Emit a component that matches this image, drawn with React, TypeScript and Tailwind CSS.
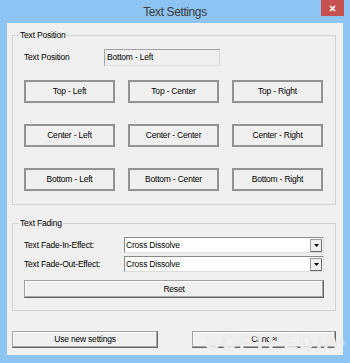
import type { ReactNode } from 'react';

const font = "font-['Liberation_Sans',Arial,sans-serif]";

function PosButton({ children }: { children: ReactNode }) {
  return (
    <button
      type="button"
      className="flex h-[23px] w-[91px] items-center justify-center border-2 border-[#939393] bg-[#f0f0f0] text-[8.5px] tracking-[-0.2px] text-black"
    >
      {children}
    </button>
  );
}

function RaisedButton({ children, className }: { children: ReactNode; className: string }) {
  return (
    <button
      type="button"
      className={`flex items-center justify-center border border-[#a0a0a0] border-b-[#646464] border-r-[#646464] bg-[#f0f0f0] text-[8.5px] tracking-[-0.2px] text-black shadow-[inset_-1px_-1px_0_#a8a8a8,inset_1px_1px_0_#ffffff] ${className}`}
    >
      {children}
    </button>
  );
}

function Combo({ value }: { value: string }) {
  return (
    <div className="flex h-[16px] w-[200px] items-center border border-[#8a8a8a] border-b-[#dcdcdc] border-r-[#dcdcdc] bg-white">
      <span className="flex-1 pl-[1px] text-[8.5px] tracking-[-0.2px]">{value}</span>
      <span className="mr-[1px] flex h-[13px] w-[12px] items-center justify-center border border-[#9c9c9c] border-b-[#6a6a6a] border-r-[#6a6a6a] bg-[#f0f0f0]">
        <svg width="5" height="3" viewBox="0 0 5 3">
          <path d="M0 0h5L2.5 3z" fill="#000" />
        </svg>
      </span>
    </div>
  );
}

export default function App() {
  const positions = [
    'Top - Left', 'Top - Center', 'Top - Right',
    'Center - Left', 'Center - Center', 'Center - Right',
    'Bottom - Left', 'Bottom - Center', 'Bottom - Right',
  ];

  return (
    <div className={`flex h-[363px] w-[350px] flex-col bg-[#8dc4f3] text-black ${font}`}>
      <div className="relative flex h-[23px] items-center justify-center">
        <span className="pt-[1px] text-[12px] tracking-[-0.4px] text-[#3a3a3a]">Text Settings</span>
        <div className="absolute right-[6px] top-0 flex h-[16px] w-[23px] items-center justify-center bg-[#c75050]">
          <svg width="7" height="7" viewBox="0 0 7 7">
            <path d="M1 1l5 5M6 1L1 6" stroke="#fff" strokeWidth="1.6" />
          </svg>
        </div>
      </div>

      <div className="relative mx-[7px] flex h-[332px] flex-col bg-[#f0f0f0] pl-[5px] pt-[6px]">
        <fieldset className="w-[324px] border border-[#d2d2d2] px-[11px] pb-[13px]">
          <legend className="-ml-[5px] px-[1px] text-[8.5px] leading-[12px] tracking-[-0.2px]">Text Position</legend>
          <div className="mt-[8px] flex items-center">
            <span className="w-[80px] text-[8.5px] tracking-[-0.2px]">Text Position</span>
            <div className="flex h-[17px] w-[116px] items-center border border-[#a3a3a3] border-b-[#e2e2e2] border-r-[#d6d6d6] pl-[2px] text-[8.5px] tracking-[-0.2px]">
              Bottom - Left
            </div>
          </div>
          <div className="mt-[14px] grid grid-cols-[91px_91px_91px] gap-x-[13px] gap-y-[21px]">
            {positions.map((p) => (
              <PosButton key={p}>{p}</PosButton>
            ))}
          </div>
        </fieldset>

        <fieldset className="mt-[12px] w-[324px] border border-[#d2d2d2] px-[11px] pb-[12px]">
          <legend className="-ml-[5px] px-[1px] text-[8.5px] leading-[12px] tracking-[-0.2px]">Text Fading</legend>
          <div className="mt-[8px] flex flex-col gap-[3px]">
            <div className="flex items-center">
              <span className="w-[100px] text-[8.5px] tracking-[-0.2px]">Text Fade-In-Effect:</span>
              <Combo value="Cross Dissolve" />
            </div>
            <div className="flex items-center">
              <span className="w-[100px] text-[8.5px] tracking-[-0.2px]">Text Fade-Out-Effect:</span>
              <Combo value="Cross Dissolve" />
            </div>
          </div>
          <RaisedButton className="mt-[8px] h-[18px] w-[300px]">Reset</RaisedButton>
        </fieldset>

        <div className="mt-[20px] flex w-[324px] justify-between">
          <RaisedButton className="h-[17px] w-[146px]">Use new settings</RaisedButton>
          <RaisedButton className="h-[17px] w-[144px]">Cancel</RaisedButton>
        </div>

        {/* watermark baked into the screenshot */}
        <span className="pointer-events-none absolute left-[198px] top-[302px] text-[22px] font-bold tracking-[1px] text-white/60 [text-shadow:0_0_1px_#d4d4d4]">
          SOFTPEDIA<sup className="text-[7px]">®</sup>
        </span>
      </div>
    </div>
  );
}
